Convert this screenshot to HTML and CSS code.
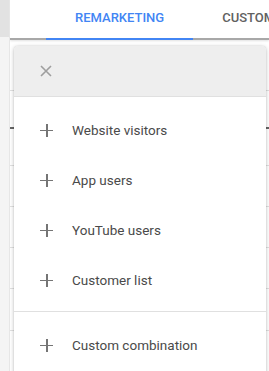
FILE: index.html
```html
<!DOCTYPE html>
<html lang="en">
<head>
    <meta charset="UTF-8">
    <meta name="viewport" content="width=device-width, initial-scale=1.0">
    <title>Audiences</title>
    <link rel="stylesheet" href="styles.css">
</head>
<body>
    <div class="sidebar">
        <div class="sidebar-top"></div>
    </div>

    <div class="main">
        <div class="tabs">
            <div class="tab active">REMARKETING</div>
            <div class="tab">CUSTOM AFFINITY</div>
        </div>

        <div class="table">
            <div class="row" style="height: 51px"></div>
            <div class="row row-dark" style="height: 38px"></div>
            <div class="row" style="height: 37px"></div>
            <div class="row" style="height: 41px"></div>
            <div class="row" style="height: 41px"></div>
            <div class="row" style="height: 41px"></div>
            <div class="row" style="height: 42px"></div>
        </div>

        <div class="menu">
            <div class="menu-header">
                <svg class="close" width="12" height="12" viewBox="0 0 12 12">
                    <path d="M1 1L11 11M11 1L1 11" stroke="#9e9e9e" stroke-width="1.6" fill="none"/>
                </svg>
            </div>
            <div class="menu-group">
                <div class="menu-item"><span class="plus"></span>Website visitors</div>
                <div class="menu-item"><span class="plus"></span>App users</div>
                <div class="menu-item"><span class="plus"></span>YouTube users</div>
                <div class="menu-item"><span class="plus"></span>Customer list</div>
            </div>
            <div class="menu-group">
                <div class="menu-item"><span class="plus"></span>Custom combination</div>
            </div>
        </div>
    </div>
</body>
</html>
```

FILE: styles.css
```css
body {
    margin: 0;
    height: 371px;
    overflow: hidden;
    display: flex;
    font-family: Roboto, "Noto Sans", sans-serif;
    background: #fff;
}
.sidebar {
    width: 9px;
    background-color: #f4f4f4;
    border-right: 1px solid #e6e6e6;
    flex-shrink: 0;
}
.sidebar-top {
    height: 37px;
    background-color: #e2e2e2;
}
.main {
    position: relative;
    flex: 1;
    overflow: hidden;
}
.tabs {
    height: 38px;
    display: flex;
    padding-left: 36px;
    background: white;
    border-bottom: 2px solid #a8a8a8;
    box-shadow: 0 1px 2px rgba(0, 0, 0, 0.12);
    white-space: nowrap;
}
.tab {
    padding: 0 29px;
    font-size: 13px;
    font-weight: 500;
    color: #616161;
    line-height: 36px;
    border-bottom: 2px solid transparent;
    margin-bottom: -2px;
}
.tab.active {
    color: #4285f4;
    border-bottom-color: #4285f4;
}
.table {
    display: flex;
    flex-direction: column;
}
.row {
    border-bottom: 1px solid #e0e0e0;
    box-sizing: border-box;
}
.row-dark {
    border-bottom: 2px solid #666666;
}
.menu {
    position: absolute;
    left: 4px;
    top: 46px;
    width: 252px;
    height: 340px;
    background: white;
    border-radius: 4px 4px 0 0;
    box-shadow: 0 1px 4px rgba(0, 0, 0, 0.25), 0 0 1px rgba(0, 0, 0, 0.2);
}
.menu-header {
    height: 50px;
    background-color: #eeeeee;
    border-bottom: 1px solid #e0e0e0;
    border-radius: 4px 4px 0 0;
    display: flex;
    align-items: center;
    padding-left: 26px;
}
.menu-group {
    padding: 8px 0 6px;
    border-bottom: 1px solid #e0e0e0;
}
.menu-item {
    height: 50px;
    display: flex;
    align-items: center;
    padding-left: 26px;
    font-size: 13.5px;
    color: #4a4a4a;
}
.plus {
    position: relative;
    width: 13px;
    height: 13px;
    margin-right: 19px;
}
.plus::before,
.plus::after {
    content: "";
    position: absolute;
    background: #757575;
}
.plus::before {
    left: 0;
    right: 0;
    top: 6px;
    height: 1.5px;
}
.plus::after {
    top: 0;
    bottom: 0;
    left: 6px;
    width: 1.5px;
}
```
